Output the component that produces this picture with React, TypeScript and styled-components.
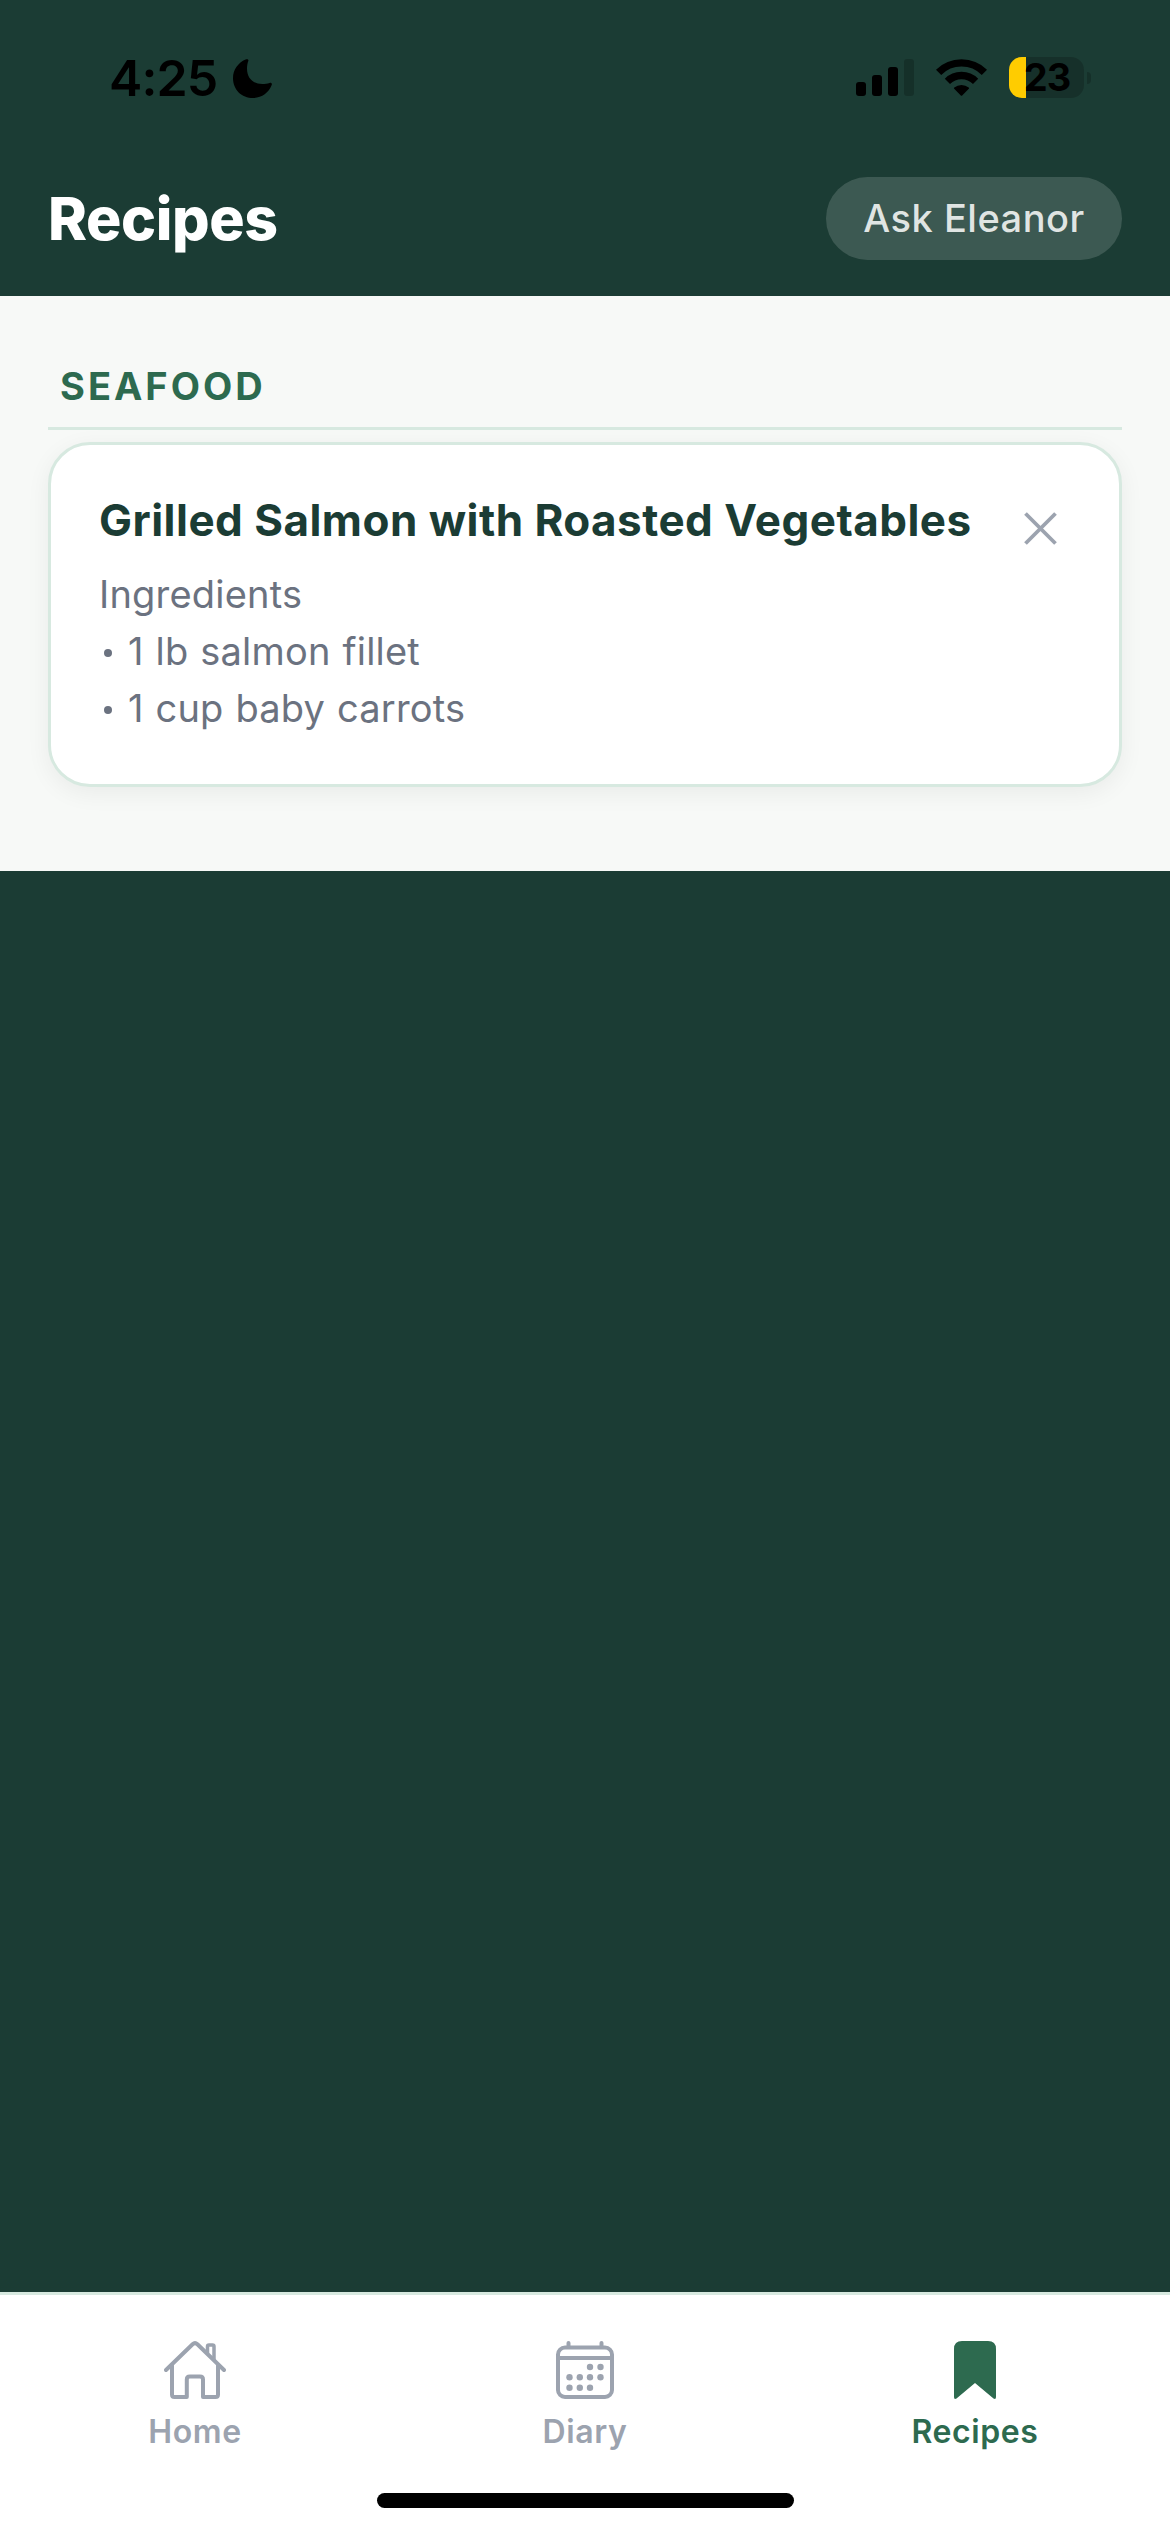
import React from "react";
import styled, { createGlobalStyle } from "styled-components";

const color = {
  forest: "#1b3c34",
  green: "#2d6a4f",
  mint: "#d7e9e0",
  paper: "#f7f9f7",
  slate: "#6b7280",
  mist: "#9ca3af",
};

const GlobalStyle = createGlobalStyle`
  *, *::before, *::after { box-sizing: border-box; }
  body {
    margin: 0;
    background: ${color.forest};
    font-family: Inter, "Liberation Sans", sans-serif;
    -webkit-font-smoothing: antialiased;
  }
  h1, h2, h3 { margin: 0; }
  button { border: 0; background: none; padding: 0; font-family: inherit; }
  svg { display: block; flex: none; }
`;

const Screen = styled.div`
  width: 1170px;
  height: 2532px;
  display: flex;
  flex-direction: column;
  background: ${color.forest};
  overflow: hidden;
`;

const StatusBar = styled.div`
  height: 141px;
  padding: 57px 79px 0 109px;
  display: flex;
  align-items: flex-start;
  justify-content: space-between;
  color: #000;
`;

const StatusGroup = styled.div<{ $gap: number }>`
  display: flex;
  align-items: flex-start;
  gap: ${(p) => p.$gap}px;

  > svg { margin-top: 2px; }
`;

const Clock = styled.span`
  width: 109px;
  margin-top: -9px;
  font-size: 50px;
  line-height: 60px;
  font-weight: 600;
  letter-spacing: -0.9px;
  white-space: nowrap;
`;

const BatteryWrap = styled.div`
  display: flex;
  align-items: center;
  gap: 3px;
`;

const Battery = styled.div<{ $fill: number }>`
  width: 75px;
  height: 41px;
  padding-left: 1px;
  border-radius: 13px;
  display: flex;
  align-items: center;
  justify-content: center;
  background: linear-gradient(
    to right,
    #ffcc00 ${(p) => p.$fill}px,
    rgba(0, 0, 0, 0.2) ${(p) => p.$fill}px
  );
  font-size: 38px;
  line-height: 41px;
  font-weight: 700;
  letter-spacing: -1px;
`;

const BatteryNub = styled.div`
  width: 4px;
  height: 12px;
  border-radius: 0 4px 4px 0;
  background: rgba(0, 0, 0, 0.2);
`;

const Header = styled.header`
  height: 155px;
  padding: 0 48px;
  display: flex;
  align-items: center;
  justify-content: space-between;
`;

const PageTitle = styled.h1`
  color: #fff;
  font-size: 59px;
  line-height: 72px;
  font-weight: 800;
  letter-spacing: -0.4px;
`;

const AskButton = styled.button`
  width: 296px;
  height: 83px;
  border-radius: 42px;
  background: rgba(255, 255, 255, 0.15);
  color: rgba(255, 255, 255, 0.85);
  font-size: 38px;
  line-height: 83px;
  font-weight: 550;
  letter-spacing: 0.5px;
  white-space: nowrap;
`;

const Content = styled.main`
  height: 575px;
  padding: 66px 48px 84px;
  background: ${color.paper};
`;

const SectionTitle = styled.h2`
  height: 68px;
  padding: 0 12px;
  border-bottom: 3px solid ${color.mint};
  color: ${color.green};
  font-size: 38px;
  line-height: 48px;
  font-weight: 700;
  letter-spacing: 3px;
`;

const Card = styled.article`
  margin-top: 12px;
  height: 345px;
  padding: 48px 48px 0;
  display: flex;
  justify-content: space-between;
  border: 3px solid ${color.mint};
  border-radius: 42px;
  background: #fff;
  box-shadow: 0 6px 24px rgba(0, 0, 0, 0.06);
`;

const CardTitle = styled.h3`
  color: ${color.forest};
  font-size: 44px;
  line-height: 54px;
  font-weight: 700;
  letter-spacing: 0.47px;
  white-space: nowrap;
`;

const Preview = styled.div`
  margin-top: 19px;
  color: ${color.slate};
  font-size: 38px;
  line-height: 57px;
  letter-spacing: 0.2px;
  word-spacing: 1px;
`;

const Ingredient = styled.div`
  display: flex;
  align-items: center;
`;

const Bullet = styled.span`
  width: 8px;
  height: 8px;
  margin: 3px 16px 0 5px;
  border-radius: 50%;
  background: ${color.slate};
`;

const RemoveButton = styled.button`
  width: 33px;
  height: 33px;
  margin: 19px 14px 0 0;
`;

const Spacer = styled.div`
  flex: 1;
`;

const TabBar = styled.nav`
  height: 240px;
  border-top: 3px solid ${color.mint};
  background: #fff;
  display: flex;
  flex-direction: column;
  align-items: center;
`;

const Tabs = styled.div`
  width: 100%;
  height: 198px;
  padding-top: 46px;
  display: grid;
  grid-template-columns: repeat(3, 1fr);
`;

const Tab = styled.div<{ $active?: boolean }>`
  display: flex;
  flex-direction: column;
  align-items: center;
  gap: 13px;
  color: ${(p) => (p.$active ? color.green : color.mist)};
`;

const TabLabel = styled.span`
  font-size: 32px;
  line-height: 40px;
  font-weight: 600;
  letter-spacing: 0.6px;
`;

const HomeIndicator = styled.div`
  width: 417px;
  height: 15px;
  border-radius: 8px;
  background: #000;
`;

const MoonIcon = () => (
  <svg width="39" height="39" viewBox="0 0 39 39" fill="currentColor">
    <path d="M13.200 0.300C14.600 -0.200 15.800 0.700 15.300 2.100C14.400 4.400 14 7 14 9.800C14 19 20 25 29.200 25C32 25 34.400 24.800 36.600 24C38.200 23.400 39.300 24.600 38.700 26.100C35.600 34 28.600 39 20.200 39C8.600 39 0 30.500 0 19.200C0 10.800 5.200 3.400 13.200 0.300Z" />
  </svg>
);

const SignalIcon = () => (
  <svg width="58" height="37" viewBox="0 0 58 37" fill="currentColor">
    <rect x="0" y="23" width="10" height="14" rx="3" />
    <rect x="16" y="16" width="10" height="21" rx="3" />
    <rect x="32" y="8" width="10" height="29" rx="3" />
    <rect x="48" y="0" width="10" height="37" rx="3" opacity="0.2" />
  </svg>
);

const WifiIcon = () => (
  <svg width="51" height="37" viewBox="0 0 51 37">
    <g fill="none" stroke="currentColor" strokeWidth="7.4">
      <path d="M2.6 13.4A32.4 32.4 0 0 1 48.4 13.4" />
      <path d="M11.4 22.3A20 20 0 0 1 39.6 22.3" />
    </g>
    <path
      d="M18.2 29.8Q17.6 29.2 18.3 28.6A11 11 0 0 1 32.7 28.6Q33.4 29.2 32.8 29.8L26.2 36.5Q25.5 37.1 24.8 36.5Z"
      fill="currentColor"
    />
  </svg>
);

const CloseIcon = () => (
  <svg width="33" height="33" viewBox="0 0 33 33">
    <path d="M1.5 1.5L31.5 31.5M31.5 1.5L1.5 31.5" stroke={color.mist} strokeWidth="3.8" />
  </svg>
);

const HomeIcon = () => (
  <svg width="62" height="58" viewBox="0 0 62 58" fill="none" stroke="currentColor" strokeWidth="4" strokeLinecap="round" strokeLinejoin="round">
    <path d="M2 29L28.6 3.2Q31 1 33.4 3.2L60 29" />
    <path d="M8 24.5V53.5Q8 56 10.5 56H22.800V38.500Q22.800 35.500 25.800 35.500H36Q39 35.500 39 38.500V56H51.500Q54 56 54 53.500V24.500" />
    <path d="M43.500 12V5.500Q43.500 4 45 4H48.500Q50 4 50 5.500V18" strokeWidth="3.500" />
  </svg>
);

const dots = [
  [34, 26], [44.5, 26],
  [13.5, 36.3], [23.8, 36.3], [34, 36.3], [44.5, 36.3],
  [13.5, 46.7], [23.8, 46.7], [34, 46.7],
];

const CalendarIcon = () => (
  <svg width="58" height="58" viewBox="0 0 58 58" fill="none" stroke="currentColor" strokeWidth="4" strokeLinecap="round">
    <rect x="2" y="6.500" width="54" height="49.500" rx="7" />
    <path d="M2 17H56" />
    <path d="M12.500 2V5M45.500 2V5" />
    <g fill="currentColor" stroke="none">
      {dots.map(([x, y]) => (
        <circle key={`${x}-${y}`} cx={x} cy={y} r="3.200" />
      ))}
    </g>
  </svg>
);

const BookmarkIcon = () => (
  <svg width="42" height="58" viewBox="0 0 42 58" fill="currentColor">
    <path d="M8 0H34Q42 0 42 8V56Q42 58.800 39.500 57.500L21 42L2.500 57.500Q0 58.800 0 56V8Q0 0 8 0Z" />
  </svg>
);

const tabs = [
  { label: "Home", icon: <HomeIcon /> },
  { label: "Diary", icon: <CalendarIcon /> },
  { label: "Recipes", icon: <BookmarkIcon />, active: true },
];

const ingredients = ["1 lb salmon fillet", "1 cup baby carrots"];

export default function App() {
  return (
    <Screen>
      <GlobalStyle />
      <StatusBar>
        <StatusGroup $gap={15}>
          <Clock>4:25</Clock>
          <MoonIcon />
        </StatusGroup>
        <StatusGroup $gap={22}>
          <SignalIcon />
          <WifiIcon />
          <BatteryWrap>
            <Battery $fill={17}>23</Battery>
            <BatteryNub />
          </BatteryWrap>
        </StatusGroup>
      </StatusBar>
      <Header>
        <PageTitle>Recipes</PageTitle>
        <AskButton>Ask Eleanor</AskButton>
      </Header>
      <Content>
        <SectionTitle>SEAFOOD</SectionTitle>
        <Card>
          <div>
            <CardTitle>Grilled Salmon with Roasted Vegetables</CardTitle>
            <Preview>
              <div>Ingredients</div>
              {ingredients.map((item) => (
                <Ingredient key={item}>
                  <Bullet />
                  {item}
                </Ingredient>
              ))}
            </Preview>
          </div>
          <RemoveButton aria-label="Remove recipe"><CloseIcon /></RemoveButton>
        </Card>
      </Content>
      <Spacer />
      <TabBar>
        <Tabs>
          {tabs.map((tab) => (
            <Tab key={tab.label} $active={tab.active}>
              {tab.icon}
              <TabLabel>{tab.label}</TabLabel>
            </Tab>
          ))}
        </Tabs>
        <HomeIndicator />
      </TabBar>
    </Screen>
  );
}
